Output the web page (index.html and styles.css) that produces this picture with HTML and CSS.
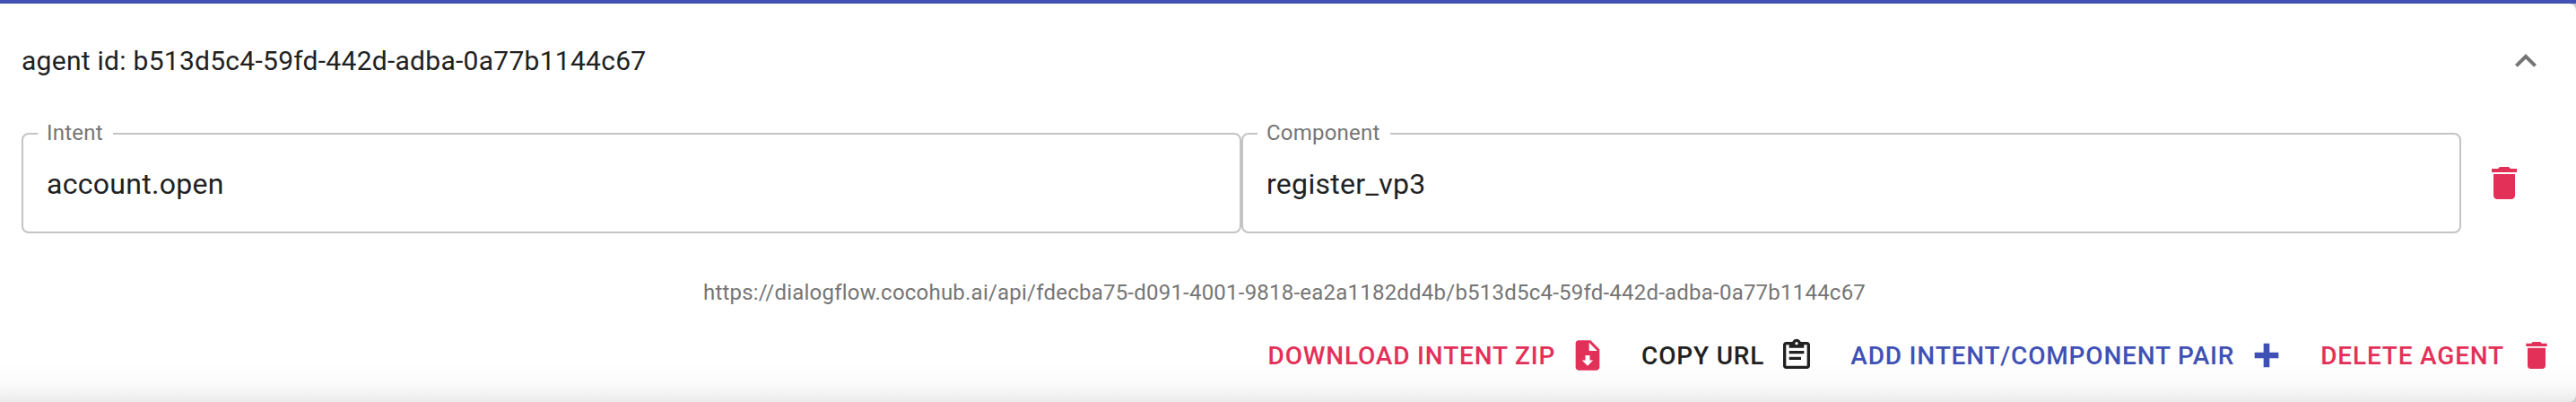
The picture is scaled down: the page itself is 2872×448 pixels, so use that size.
FILE: index.html
```html
<!DOCTYPE html>
<html lang="en">
<head>
<meta charset="utf-8">
<title>Agent</title>
<link rel="stylesheet" href="styles.css">
</head>
<body>
<main class="panel">
  <header class="summary">
    <span class="agent-id">agent id: b513d5c4-59fd-442d-adba-0a77b1144c67</span>
    <svg class="chevron" viewBox="0 0 24 24"><path d="M12 8l-6 6 1.410 1.410L12 10.830l4.590 4.580L18 14z"/></svg>
  </header>
  <section class="pair">
    <fieldset class="field"><legend>Intent</legend><div class="value">account.open</div></fieldset>
    <fieldset class="field"><legend>Component</legend><div class="value">register_vp3</div></fieldset>
    <svg class="trash" viewBox="0 0 24 24"><path d="M6 19c0 1.100.9 2 2 2h8c1.100 0 2-.9 2-2V7H6v12zM19 4h-3.500l-1-1h-5l-1 1H5v2h14V4z"/></svg>
  </section>
  <div class="url">https://dialogflow.cocohub.ai/api/fdecba75-d091-4001-9818-ea2a1182dd4b/b513d5c4-59fd-442d-adba-0a77b1144c67</div>
  <footer class="actions">
    <span class="action pink">DOWNLOAD INTENT ZIP<svg viewBox="0 0 24 24"><path d="M14 2H6C4.900 2 4 2.900 4 4v16c0 1.100.9 2 2 2h12c1.100 0 2-.9 2-2V8l-6-6zm-2 17l-3.700-3.700h2.200V12h3v3.300h2.200L12 19zM13 9V3.500L18.500 9H13z"/></svg></span>
    <span class="action dark">COPY URL<svg viewBox="0 0 24 24"><path d="M19 3h-4.180C14.400 1.840 13.300 1 12 1s-2.400.84-2.820 2H5c-1.100 0-2 .9-2 2v14c0 1.100.9 2 2 2h14c1.100 0 2-.9 2-2V5c0-1.100-.9-2-2-2zm-7 0a1 1 0 1 1 0 2 1 1 0 0 1 0-2zm7 16H5V5h2v2h10V5h2v14zM7 9h10v2H7zM7 13h8v2H7z"/></svg></span>
    <span class="action blue">ADD INTENT/COMPONENT PAIR<svg viewBox="0 0 24 24"><path d="M10 4h4v6h6v4h-6v6h-4v-6H4v-4h6z"/></svg></span>
    <span class="action pink">DELETE AGENT<svg viewBox="0 0 24 24"><path d="M6 19c0 1.100.9 2 2 2h8c1.100 0 2-.9 2-2V7H6v12zM19 4h-3.500l-1-1h-5l-1 1H5v2h14V4z"/></svg></span>
  </footer>
</main>
</body>
</html>
```
FILE: styles.css
```css
* { box-sizing: border-box; }
body { margin: 0; height: 448px; border-top: 4px solid #3f51b5; background: #ccc; font-family: Roboto, sans-serif; color: #212121; overflow: hidden; }
.panel { height: 444px; border-radius: 0 8px 8px 0; background: linear-gradient(#fff 0, #fff 400px, #fafafa 426px, #ebebeb 444px); overflow: hidden; }
.summary { height: 133px; padding: 0 32px 5px 24px; display: flex; align-items: center; justify-content: space-between; }
.agent-id { font-size: 30px; letter-spacing: 0.27px; line-height: 36px; }
.chevron { width: 48px; height: 48px; fill: #757575; }
.pair { display: flex; align-items: flex-start; padding-left: 24px; height: 123px; }
.field { width: 1360px; height: 123px; margin: 0; padding: 0 26px 0 16px; border: 2px solid #c4c4c4; border-radius: 8px; }
.field legend { padding: 0 11px 2px 10px; font-size: 24px; line-height: 22px; letter-spacing: 0.22px; color: #757575; }
.value { padding: 25px 10px 0; font-size: 32px; line-height: 38px; letter-spacing: 0.3px; }
.trash { width: 48px; height: 48px; margin: 43px 0 0 24px; fill: #e33059; }
.url { margin-top: 52px; padding-right: 8px; text-align: center; font-size: 24px; line-height: 28px; letter-spacing: 0.22px; color: #757575; }
.actions { display: flex; justify-content: flex-end; gap: 40px; margin-top: 36px; padding-right: 24px; }
.action { display: flex; align-items: center; font-size: 28px; font-weight: 500; letter-spacing: 0.82px; white-space: nowrap; }
.action svg { width: 40px; height: 40px; margin-left: 16px; fill: currentColor; }
.pink { color: #e33059; }
.blue { color: #3f51b5; }
```
